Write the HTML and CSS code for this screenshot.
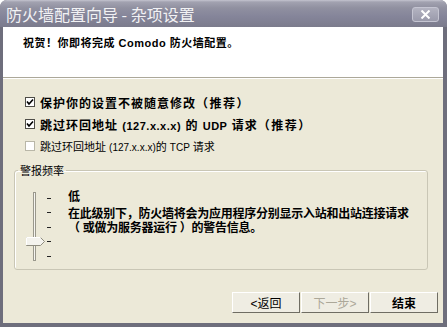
FILE: index.html
```html
<!DOCTYPE html>
<html lang="zh-CN">
<head>
<meta charset="utf-8">
<title>防火墙配置向导 - 杂项设置</title>
<link rel="stylesheet" href="styles.css">
</head>
<body>
<div class="window">
  <div class="titlebar">
    <span class="title">防火墙配置向导 - 杂项设置</span>
    <span class="close">
      <svg width="11" height="9" viewBox="0 0 11 9"><path d="M1.5 0.5 L9.5 8.5 M9.5 0.5 L1.5 8.5" stroke="#fff" stroke-width="2" fill="none"/></svg>
    </span>
  </div>
  <div class="client">
    <div class="header">
      <p class="header-text">祝贺！你即将完成 <span class="latin">Comodo</span> 防火墙配置。</p>
    </div>
    <div class="options">
      <label class="opt opt-big">
        <span class="cb checked"><svg width="8" height="8" viewBox="0 0 8 8"><path d="M1 3.5 L3 6 L7 1.5" stroke="#000" stroke-width="1.6" fill="none"/></svg></span>
        <span>保护你的设置不被随意修改<span class="paren">（推荐）</span></span>
      </label>
      <label class="opt opt-big">
        <span class="cb checked"><svg width="8" height="8" viewBox="0 0 8 8"><path d="M1 3.5 L3 6 L7 1.5" stroke="#000" stroke-width="1.6" fill="none"/></svg></span>
        <span>跳过环回地址 <span class="latin small">(127.x.x.x)</span> 的 <span class="latin">UDP</span> 请求<span class="paren">（推荐）</span></span>
      </label>
      <label class="opt opt-small">
        <span class="cb"></span>
        <span>跳过环回地址 <span class="latin">(127.x.x.x)</span>的 <span class="latin">TCP</span> 请求</span>
      </label>
    </div>
    <fieldset class="group">
      <legend>警报频率</legend>
      <div class="group-body">
        <svg class="slider" width="30" height="75" viewBox="0 0 30 75">
          <rect x="9.5" y="3.5" width="2" height="68" fill="#f6f5f0" stroke="#9a988c"/>
          <g stroke="#222" stroke-width="1">
            <line x1="23" y1="9.5" x2="27" y2="9.5"/>
            <line x1="23" y1="23.5" x2="27" y2="23.5"/>
            <line x1="23" y1="38.5" x2="27" y2="38.5"/>
            <line x1="23" y1="52.5" x2="27" y2="52.5"/>
            <line x1="23" y1="67.5" x2="27" y2="67.5"/>
          </g>
          <polygon points="2.5,48.5 16.5,48.5 20.5,52.5 16.5,56.5 2.5,56.5" fill="#f4f3ee" stroke="#8f8d80"/>
          <polyline points="2.5,56 2.5,48.5 16.5,48.5" fill="none" stroke="#fff"/>
        </svg>
        <div class="desc">
          <p class="level">低</p>
          <p class="info">在此级别下，防火墙将会为应用程序分别显示入站和出站连接请求<br><span class="lp">（</span>或做为服务器运行<span class="rp">）</span>的警告信息。</p>
        </div>
      </div>
    </fieldset>
    <div class="buttons">
      <button class="btn">&lt;返回</button>
      <button class="btn disabled">下一步&gt;</button>
      <button class="btn strong">结束</button>
    </div>
  </div>
</div>
</body>
</html>
```
FILE: styles.css
```css
* { box-sizing: border-box; }
html, body { margin: 0; padding: 0; background: #ffffff; }
body {
  font-family: "Liberation Sans", "Noto Sans CJK SC", sans-serif;
  font-size: 12px;
  color: #000;
}
p { margin: 0; }

.window {
  width: 447px;
  height: 327px;
  display: flex;
  flex-direction: column;
  border-radius: 7px 7px 0 0;
  overflow: hidden;
  background: #6e6e7c;
}

.titlebar {
  height: 27px;
  flex: none;
  display: flex;
  align-items: center;
  justify-content: space-between;
  padding: 0 8px 0 6px;
  background: linear-gradient(to bottom, #c4c4cf 0, #a2a2b0 2px, #9090a0 8px, #85859a 60%, #7b7b8c 100%);
}
.title {
  font-family: "Noto Sans CJK SC", sans-serif;
  font-size: 16px;
  line-height: 18px;
  color: #f2f2f4;
  margin-top: 1px;
}
.close {
  width: 27px;
  height: 15px;
  display: flex;
  align-items: center;
  justify-content: center;
  border: 1px solid #c5c5d2;
  border-radius: 3px;
  background: linear-gradient(to bottom, #b3b3c1, #9a9aab);
  margin-top: 1px;
}

.client {
  flex: 1;
  display: flex;
  flex-direction: column;
  background: #ece9d8;
  margin: 0 4px 4px 3px;
}

.header {
  height: 51px;
  flex: none;
  background: #fff;
  border-bottom: 1px solid #aca899;
  box-shadow: 0 1px 0 #fff;
  padding: 9px 0 0 20px;
}
.header-text {
  font-weight: bold;
  font-size: 11px;
  letter-spacing: 0.5px;
  line-height: 14px;
}

.options {
  padding: 13px 0 0 22px;
  display: flex;
  flex-direction: column;
}
.opt {
  height: 22px;
  display: flex;
  align-items: center;
  gap: 5px;
}
.opt-big {
  font-weight: bold;
  font-size: 12px;
  letter-spacing: 1px;
}
.opt-big .latin { letter-spacing: 0.5px; font-size: 11px; }
.paren { letter-spacing: 1.5px; }
.opt-small {
  font-size: 11px;
}
.opt-small .latin { font-size: 10px; }
.cb {
  width: 10px;
  height: 10px;
  flex: none;
  background: #fff;
  border: 1px solid #b9b7a8;
  display: flex;
  align-items: center;
  justify-content: center;
}
.cb.checked {
  border-color: #4e4d47;
}

.group {
  margin: 6px 15px 0 11px;
  padding: 0 0 5px 0;
  border: 1px solid #c9c6b5;
  border-radius: 3px;
  box-shadow: inset 1px 1px 0 #fff;
}
.group legend {
  margin-left: 3px;
  padding: 0 2px;
  font-family: "Noto Sans CJK SC", sans-serif;
  font-size: 11px;
  line-height: 14px;
}
.group-body {
  display: flex;
  padding: 12px 0 0 9px;
}
.slider { flex: none; }
.desc {
  margin-left: 14px;
  padding-top: 1px;
  font-weight: bold;
  font-size: 12px;
  letter-spacing: -0.25px;
  line-height: 14px;
}
.level { margin-bottom: 3px; }
.lp { margin-right: 3px; }
.rp { margin-left: 3px; }

.buttons {
  display: flex;
  justify-content: flex-end;
  gap: 1px;
  padding: 22px 5px 0 0;
}
.btn {
  width: 68px;
  height: 21px;
  font-family: "Liberation Sans", "Noto Sans CJK SC", sans-serif;
  font-size: 12px;
  color: #000;
  background: #efede3;
  border: 1px solid;
  border-color: #fff #6f6d63 #6f6d63 #fff;
  padding: 0;
}
.btn.disabled { color: #aca899; }
.btn.strong { font-weight: bold; }
```
